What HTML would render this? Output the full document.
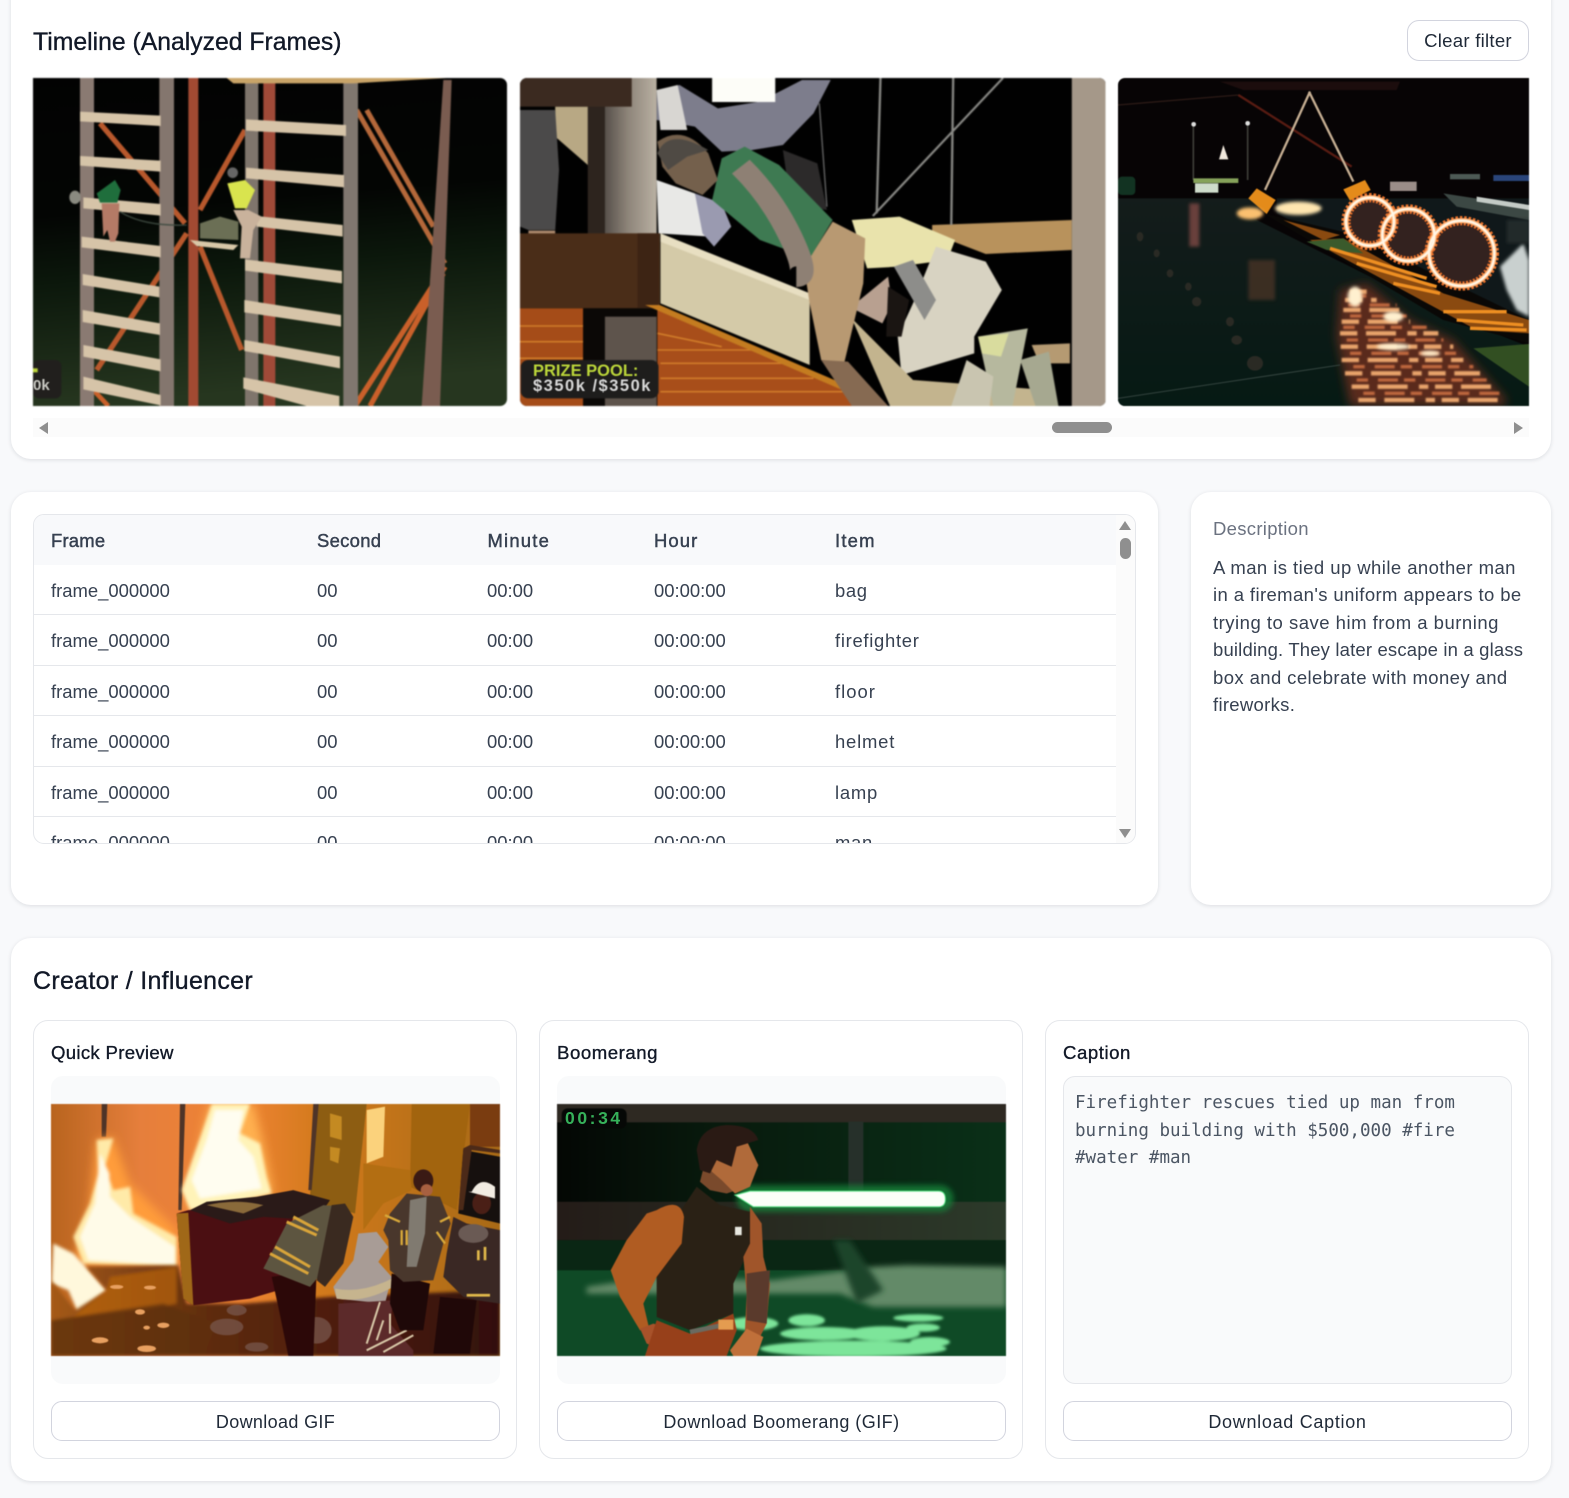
<!DOCTYPE html>
<html lang="en"><head><meta charset="utf-8"><title>Timeline</title>
<style>
html,body{margin:0;padding:0;background:#f8f9fb;}
body{position:relative;width:1569px;height:1498px;overflow:hidden;font-family:"Liberation Sans",sans-serif;color:#1f2937;}
.a{position:absolute;white-space:nowrap;}
.card{position:absolute;background:#fff;border-radius:20px;box-shadow:0 1px 4px rgba(17,24,39,.12);}
.sub{position:absolute;background:#fff;border:1px solid #e5e7eb;border-radius:15px;box-sizing:border-box;}
.btn{position:absolute;background:#fff;border:1px solid #d2d4de;border-radius:11px;box-sizing:border-box;text-align:center;font-size:18px;color:#1f2937;line-height:40px;}
.media{position:absolute;background:#f9fafb;border-radius:12px;}
svg.ph{position:absolute;display:block;}
.t{position:absolute;white-space:nowrap;font-size:18.45px;line-height:24px;color:#374151;}
.h{position:absolute;white-space:nowrap;font-size:18.45px;line-height:24px;color:#374151;-webkit-text-stroke:.45px #374151;}
.ln{position:absolute;left:34px;width:1082px;height:1px;background:#e5e7eb;}
.tr{position:absolute;width:0;height:0;}
.ds{display:block;}
h2,h3{margin:0;font-weight:400;}
</style></head><body>

<div class="card" style="left:11px;top:-20px;width:1540px;height:479px"></div>
<h2 class="a" style="left:33px;top:28px;font-size:24.75px;line-height:30px;color:#111827;-webkit-text-stroke:.35px #111827">Timeline (Analyzed Frames)</h2>
<div class="btn" style="left:1407px;top:20px;width:122px;height:41px;border-radius:12px;line-height:40px;font-size:18.6px;letter-spacing:.25px">Clear filter</div>

<!-- frame 1 -->
<svg class="ph" style="left:33px;top:78px;width:474px;height:328px;border-radius:0 7px 7px 0;filter:blur(.7px)" viewBox="99 234 1422 984" preserveAspectRatio="none">
<defs><linearGradient id="g1" x1="0" y1="0" x2=".12" y2="1"><stop offset="0" stop-color="#020202"/><stop offset=".42" stop-color="#030503"/><stop offset=".62" stop-color="#0b170b"/><stop offset="1" stop-color="#26361f"/></linearGradient></defs>
<rect x="99" y="234" width="1422" height="984" fill="url(#g1)"/>
<g stroke-linecap="butt" fill="none">
<path d="M300 370L555 670M560 700L290 1110M600 630L735 390M600 740L725 1050" stroke="#b8582c" stroke-width="16"/>
<path d="M1070 330L1335 790M1100 330L1300 680" stroke="#b5683a" stroke-width="15"/>
<path d="M1335 800L1065 1218M1330 820L1110 1218" stroke="#c9602a" stroke-width="16"/>
<path d="M280 1170L325 1218" stroke="#c9602a" stroke-width="14"/>
</g>
<rect x="565" y="234" width="30" height="984" fill="#a24a32"/>
<rect x="790" y="234" width="36" height="984" fill="#a04a38"/>
<path d="M1330 240H1355L1320 1218H1265Z" fill="#7a5c50"/>
<rect x="240" y="234" width="42" height="984" fill="#8a7a72"/>
<rect x="478" y="234" width="44" height="984" fill="#84766e"/>
<rect x="735" y="234" width="40" height="984" fill="#7f756c"/>
<rect x="1030" y="234" width="44" height="984" fill="#80776f"/>
<path d="M680 234H1340L1060 250H700Z" fill="#c9a468"/>
<g fill="#d6c4a8">
<path d="M240 335L482 347V378L240 364Z"/><path d="M240 468L482 482V515L240 497Z"/>
<path d="M250 592L482 612V647L250 625Z"/><path d="M245 710L482 738V772L245 742Z"/>
<path d="M248 822L478 860V892L248 855Z"/><path d="M248 930L480 970V1005L248 966Z"/>
<path d="M250 1035L482 1078V1114L250 1070Z"/><path d="M250 1130L482 1185V1216L250 1168Z"/>
<path d="M738 358L1038 375V408L738 392Z"/><path d="M738 503L1032 525V562L738 535Z"/>
<path d="M770 648L1028 675V710L770 680Z"/><path d="M735 778L1026 813V850L735 812Z"/>
<path d="M733 900L1023 945V980L733 937Z"/><path d="M733 1020L1020 1070V1105L733 1053Z"/>
<path d="M730 1132L1018 1188V1218H920L730 1166Z"/>
</g>
<ellipse cx="225" cy="592" rx="17" ry="20" fill="#8a8a80"/>
<path d="M290 580L345 540L362 570L352 608H300Z" fill="#1f6e3c"/>
<path d="M305 610H358L355 700L345 725H330L322 690L310 710Z" fill="#b47a66"/>
<path d="M360 635Q430 680 560 675" stroke="#3e4a40" stroke-width="4" fill="none"/>
<path d="M600 670L660 650L715 665L715 720L600 715Z" fill="#6b6f55"/>
<path d="M570 720L715 735L700 750L590 738Z" fill="#d8c8a8"/>
<circle cx="698" cy="518" r="16" fill="#666"/>
<path d="M682 550L735 540L765 570L740 625H705Z" fill="#d9e44e"/>
<path d="M700 630L745 630L785 650L760 690L750 775H720L725 680Z" fill="#c9b29c"/>
<rect x="99" y="1080" width="85" height="115" rx="18" fill="#211f1d"/>
<rect x="99" y="1105" width="14" height="12" fill="#bcd43a"/>
</svg>
<span class="a" style="left:33px;top:377px;font-size:15px;line-height:18px;font-weight:700;color:#c8c8c2;filter:blur(.4px)">0k</span>

<!-- frame 2 -->
<svg class="ph" style="left:520px;top:78px;width:585.5px;height:328px;border-radius:7px;filter:blur(.7px)" viewBox="13 24 1530 984" preserveAspectRatio="none">
<defs><linearGradient id="g2" x1="0" x2="1" y1="0" y2="0"><stop offset="0" stop-color="#57504a"/><stop offset=".45" stop-color="#8e857a"/><stop offset="1" stop-color="#b9b0a2"/></linearGradient></defs>
<rect x="13" y="24" width="1530" height="984" fill="#010101"/>
<path d="M105 110H195V290L105 200Z" fill="#b8a884"/>
<path d="M13 120H105L115 300L105 480H35L13 470Z" fill="#4b4a4a"/>
<path d="M35 482H105V510H35Z" fill="#b08c70"/>
<path d="M430 45L530 115L640 95L750 30H825L780 130L700 225L620 240L540 245L470 170L370 150V60Z" fill="#7d7d8c"/>
<path d="M370 60L425 45L450 180L380 180Z" fill="#d8d6d2"/>
<rect x="515" y="24" width="165" height="72" fill="#fdfdf8"/>
<path d="M370 330L470 370L510 500L375 490Z" fill="#e8e8e6"/>
<path d="M470 370L540 400L565 470L520 530L490 490Z" fill="#9a9ab0"/>
<path d="M700 240L790 280L815 420L720 400Z" fill="#2c2a2a"/>
<rect x="190" y="100" width="50" height="395" fill="#2d241e"/>
<rect x="235" y="24" width="135" height="470" fill="url(#g2)"/>
<rect x="13" y="24" width="292" height="86" fill="#3b2a20"/>
<path d="M1090 465L1455 450V540L1230 552L1090 490Z" fill="#b8925c"/>
<path d="M1350 825L1450 820V880H1370Z" fill="#b59a72"/>
<rect x="1455" y="24" width="88" height="984" fill="#a59889"/>
<path d="M955 24L945 430M1145 24L1140 465M1275 24L935 438" stroke="#8a8a86" stroke-width="6" fill="none"/>
<path d="M795 100L815 410" stroke="#777" stroke-width="3"/>
<rect x="13" y="490" width="365" height="225" fill="#4a2d18"/>
<rect x="320" y="490" width="55" height="225" fill="#3d2414"/>
<rect x="13" y="715" width="165" height="293" fill="#a54c18"/>
<path d="M13 768H178M13 815H178M13 865H178" stroke="#d8842c" stroke-width="4"/>
<rect x="178" y="715" width="200" height="293" fill="#0b0806"/>
<rect x="235" y="740" width="135" height="268" fill="#5e544c"/>
<path d="M372 712L870 950L880 1008H372Z" fill="#a84e1a"/>
<path d="M372 790L540 830M372 840H640M380 880H700M380 925H780M380 965H860" stroke="#d7842c" stroke-width="4" fill="none"/>
<path d="M340 705H378L865 945V965Z" fill="#c47c20"/>
<path d="M380 490L770 670V885L380 700Z" fill="#d4caa8"/>
<path d="M380 490L770 670V690L380 515Z" fill="#e8dfc2"/>
<path d="M880 450L1005 440L1150 510L1130 570L1000 590L920 595Z" fill="#e9e3ac"/>
<path d="M1100 530L1230 575L1272 660L1200 800L1200 850L1010 915L1000 800L1040 700Z" fill="#d8d3c2"/>
<path d="M890 700L975 620L985 700L960 760L890 720Z" fill="#b8a090"/>
<path d="M975 650L1030 690L1010 800L970 800Z" fill="#1a1512"/>
<path d="M990 590L1040 570L1100 690L1070 750Z" fill="#8d8d8a"/>
<path d="M880 745L1040 930L1390 960V1008H980Z" fill="#c3b48e"/>
<path d="M1210 800L1340 775L1300 1008H1250Z" fill="#b6b89e"/>
<path d="M1210 800L1290 790L1270 860L1220 850Z" fill="#d9dc9e"/>
<path d="M1320 870L1395 845L1420 1008H1360Z" fill="#a6a890"/>
<path d="M1180 870L1250 920L1240 1008H1140Z" fill="#c9c5b0"/>
<path d="M830 455L915 505L910 640L860 880L800 870L770 700L755 590Z" fill="#b89972"/>
<path d="M800 870L870 875L975 1008H880Z" fill="#866a52"/>
<path d="M540 265L600 230L690 285L830 450L770 565L640 510L515 390Z" fill="#3e7a52"/>
<path d="M590 290Q670 380 720 500T735 620" stroke="#8e8074" stroke-width="62" fill="none"/>
<path d="M372 215Q440 160 505 250L530 330L490 375L420 340L385 290Z" fill="#74604c"/>
<path d="M372 250Q400 170 505 240L450 260L400 300Z" fill="#4f4a44"/>
<rect x="15" y="870" width="360" height="115" rx="20" fill="#1e1d1c"/>
</svg>
<span class="a" style="left:533px;top:363px;font-size:16.5px;line-height:16px;font-weight:700;color:#bcd63a;filter:blur(.5px)">PRIZE POOL:</span>
<span class="a" style="left:533px;top:378px;font-size:16.5px;line-height:16px;font-weight:700;color:#d8d8d8;letter-spacing:1.5px;filter:blur(.5px)">$350k /$350k</span>

<!-- frame 3 -->
<svg class="ph" style="left:1118px;top:78px;width:411px;height:328px;border-radius:7px 0 0 7px;filter:blur(.6px)" viewBox="24 234 1233 984" preserveAspectRatio="none">
<defs>
<linearGradient id="g3" x1="0" y1="0" x2="0" y2="1"><stop offset="0" stop-color="#141c1b"/><stop offset="1" stop-color="#061a14"/></linearGradient>
<filter id="b3" x="-30%" y="-30%" width="160%" height="160%"><feGaussianBlur stdDeviation="5"/></filter>
<filter id="b4" x="-30%" y="-30%" width="160%" height="160%"><feGaussianBlur stdDeviation="14"/></filter>
<filter id="b5" x="-10%" y="-10%" width="120%" height="120%"><feGaussianBlur stdDeviation="2.5"/></filter>
</defs>
<rect x="24" y="234" width="1233" height="984" fill="#070405"/>
<path d="M330 245H870L860 270H400Z" fill="#1c0d0d"/>
<path d="M24 315L385 285" stroke="#2b1a16" stroke-width="4" fill="none"/>
<path d="M385 285L725 500" stroke="#571b12" stroke-width="7" fill="none"/>
<rect x="24" y="530" width="52" height="55" rx="12" fill="#123322"/>
<path d="M250 370V540M413 370V540" stroke="#3d3d38" stroke-width="5"/>
<circle cx="251" cy="373" r="7" fill="#ddd"/><circle cx="413" cy="370" r="7" fill="#ddd"/>
<path d="M340 435L355 478H327Z" fill="#f0e8dc"/>
<rect x="250" y="535" width="135" height="14" fill="#86a25a"/>
<rect x="255" y="550" width="70" height="28" fill="#cfdccb"/>
<rect x="840" y="545" width="80" height="28" fill="#9a8d88"/>
<rect x="1150" y="525" width="107" height="18" fill="#2a457a"/>
<rect x="1020" y="522" width="90" height="16" fill="#4d5a55"/>
<path d="M24 595H450L440 660L1000 940L1257 1040V1218H24Z" fill="url(#g3)"/>
<path d="M500 595L1257 595V1030L500 640Z" fill="#10181a"/>
<path d="M1000 580L1257 620V660L1040 620Z" fill="#3c4844"/>
<path d="M1100 590L1257 615V630L1100 605Z" fill="#c4cbc6"/>
<path d="M460 640L720 700L1257 960V1030L1000 960Z" fill="#0a0806"/>
<path d="M520 660L690 705L640 720ZM600 720L700 715L1000 880L1257 960V1000L1100 990Z" fill="#8a4a10"/>
<path d="M590 725L700 715L760 760L650 750Z" fill="#3a5a2c"/>
<path d="M660 745L950 835M740 790L980 860M850 850L990 880M1000 935L1190 935M1040 960L1240 975M1080 985L1250 990" stroke="#ee8f22" stroke-width="10" fill="none"/>
<path d="M1090 1045L1257 1032V1160Z" fill="#324f22"/>
<path d="M600 275L465 570M597 275L730 545" stroke="#c5ae92" stroke-width="7" fill="none"/>
<path d="M415 595L440 565L497 600L470 642Z" fill="#e48b1a"/>
<path d="M700 568L765 540L782 570L720 602Z" fill="#e48b1a"/>
<ellipse cx="420" cy="640" rx="40" ry="18" fill="#fbc070" filter="url(#b3)"/>
<ellipse cx="565" cy="625" rx="70" ry="20" fill="#ffe6b0" filter="url(#b3)"/>
<path d="M1170 800L1240 730L1257 780V950L1220 930L1190 870Z" fill="#c9d0cf" filter="url(#b3)"/>
<rect x="1190" y="660" width="67" height="70" fill="#242a2c" filter="url(#b3)"/>
<g fill="#33221f">
<circle cx="780" cy="665" r="72"/><circle cx="895" cy="705" r="78"/><circle cx="1055" cy="760" r="98"/></g>
<g fill="none">
<g stroke="#e8702a" stroke-width="28" stroke-dasharray="7 5"><circle cx="780" cy="665" r="72"/><circle cx="895" cy="705" r="78"/><circle cx="1055" cy="760" r="98"/></g>
<g stroke="#ffb478" stroke-width="15"><circle cx="780" cy="665" r="72"/><circle cx="895" cy="705" r="78"/><circle cx="1055" cy="760" r="98"/></g>
<g stroke="#fff6e6" stroke-width="7"><circle cx="780" cy="665" r="72"/><circle cx="895" cy="705" r="78"/><circle cx="1055" cy="760" r="98"/></g>
</g>
<rect x="238" y="610" width="30" height="130" fill="#7f4a44" filter="url(#b3)" opacity=".8"/>
<rect x="415" y="780" width="80" height="120" fill="#5a3a2c" filter="url(#b3)" opacity=".6"/>
<path d="M690 870L770 850L900 960L1030 1020L1190 1200L1180 1218H720L680 1010Z" fill="#5a2a1c" filter="url(#b4)"/>
<g filter="url(#b5)" fill="none">
<path d="M720 875H770M705 900H800M700 930H880M695 965H900M690 1000H985M692 1040H1030M695 1080H1060M705 1120H1110M725 1160H1150M745 1200H1190" stroke="#e9a46c" stroke-width="13" stroke-dasharray="52 26 90 34 28 20"/>
<path d="M735 888H780M715 915H860M720 948H890M700 982H950M710 1020H1000M720 1060H1040M730 1100H1090M740 1140H1130M760 1180H1170" stroke="#c0683e" stroke-width="10" stroke-dasharray="34 30 60 18"/>
</g>
<g fill="#fff0cf" filter="url(#b3)"><ellipse cx="735" cy="890" rx="22" ry="30"/><ellipse cx="850" cy="950" rx="30" ry="16"/><ellipse cx="850" cy="1040" rx="50" ry="10"/><ellipse cx="960" cy="1060" rx="30" ry="8"/></g>
<g fill="#2a2a24"><ellipse cx="90" cy="710" rx="10" ry="14"/><ellipse cx="140" cy="760" rx="9" ry="12"/><ellipse cx="180" cy="820" rx="10" ry="12"/><ellipse cx="235" cy="860" rx="10" ry="12"/><ellipse cx="260" cy="905" rx="14" ry="14"/><ellipse cx="360" cy="965" rx="12" ry="14"/><ellipse cx="380" cy="1020" rx="16" ry="14"/><ellipse cx="435" cy="1090" rx="24" ry="22"/></g>
<path d="M24 1195L690 1095" stroke="#33433e" stroke-width="3"/>
</svg>

<!-- horizontal scrollbar -->
<div class="a" style="left:33px;top:418px;width:1496px;height:19px;background:#fbfbfb"></div>
<div class="tr" style="left:39px;top:422px;border-top:6.3px solid transparent;border-bottom:6.3px solid transparent;border-right:9.5px solid #8f8f8f"></div>
<div class="tr" style="left:1514px;top:422px;border-top:6.3px solid transparent;border-bottom:6.3px solid transparent;border-left:9.5px solid #8f8f8f"></div>
<div class="a" style="left:1052px;top:422px;width:60px;height:11px;border-radius:6px;background:#8f8f8f"></div>

<!-- table card -->
<div class="card" style="left:11px;top:492px;width:1147px;height:413px"></div>
<div class="a" style="left:33px;top:514px;width:1103px;height:330px;border:1px solid #e5e7eb;border-radius:11px;box-sizing:border-box;overflow:hidden;background:#fff">
  <div style="position:absolute;left:0;top:0;width:1083px;height:50px;background:#f8f9fb"></div>
  <div style="position:absolute;right:0;top:0;width:19px;height:330px;background:#fbfbfb"></div>
  <span class="t" style="left:17px;top:316px">frame_000000</span><span class="t" style="left:283px;top:316px">00</span><span class="t" style="left:453px;top:316px">00:00</span><span class="t" style="left:620px;top:316px">00:00:00</span><span class="t" style="left:801px;top:316px;letter-spacing:.7px">man</span>
</div>
<div class="ln" style="top:614px"></div><div class="ln" style="top:665px"></div><div class="ln" style="top:715px"></div><div class="ln" style="top:766px"></div><div class="ln" style="top:816px"></div>
<div class="tr" style="left:1119px;top:521px;border-left:6.3px solid transparent;border-right:6.3px solid transparent;border-bottom:9.5px solid #8f8f8f"></div>
<div class="a" style="left:1120px;top:538px;width:11px;height:21px;border-radius:6px;background:#8f8f8f"></div>
<div class="tr" style="left:1119px;top:828.5px;border-left:6.3px solid transparent;border-right:6.3px solid transparent;border-top:9.5px solid #8f8f8f"></div>

<span class="h" style="left:51px;top:529px;letter-spacing:.2px">Frame</span><span class="h" style="left:317px;top:529px;letter-spacing:.3px">Second</span><span class="h" style="left:487.5px;top:529px;letter-spacing:1.2px">Minute</span><span class="h" style="left:654px;top:529px;letter-spacing:1.1px">Hour</span><span class="h" style="left:835px;top:529px;letter-spacing:1.2px">Item</span>

<span class="t" style="left:51px;top:579px">frame_000000</span><span class="t" style="left:317px;top:579px">00</span><span class="t" style="left:487px;top:579px">00:00</span><span class="t" style="left:654px;top:579px">00:00:00</span><span class="t" style="left:835px;top:579px;letter-spacing:.6px">bag</span>
<span class="t" style="left:51px;top:629px">frame_000000</span><span class="t" style="left:317px;top:629px">00</span><span class="t" style="left:487px;top:629px">00:00</span><span class="t" style="left:654px;top:629px">00:00:00</span><span class="t" style="left:835px;top:629px;letter-spacing:.7px">firefighter</span>
<span class="t" style="left:51px;top:680px">frame_000000</span><span class="t" style="left:317px;top:680px">00</span><span class="t" style="left:487px;top:680px">00:00</span><span class="t" style="left:654px;top:680px">00:00:00</span><span class="t" style="left:835px;top:680px;letter-spacing:1px">floor</span>
<span class="t" style="left:51px;top:730px">frame_000000</span><span class="t" style="left:317px;top:730px">00</span><span class="t" style="left:487px;top:730px">00:00</span><span class="t" style="left:654px;top:730px">00:00:00</span><span class="t" style="left:835px;top:730px;letter-spacing:.8px">helmet</span>
<span class="t" style="left:51px;top:781px">frame_000000</span><span class="t" style="left:317px;top:781px">00</span><span class="t" style="left:487px;top:781px">00:00</span><span class="t" style="left:654px;top:781px">00:00:00</span><span class="t" style="left:835px;top:781px;letter-spacing:.75px">lamp</span>

<!-- description -->
<div class="card" style="left:1191px;top:492px;width:360px;height:413px"></div>
<span class="a" style="left:1213px;top:517px;font-size:18.5px;line-height:24px;color:#6b7280;letter-spacing:.3px">Description</span>
<div class="a" style="left:1213px;top:554px;font-size:18.5px;line-height:27.4px;color:#374151"><span class="ds" style="letter-spacing:.44px">A man is tied up while another man</span><span class="ds" style="letter-spacing:.39px">in a fireman's uniform appears to be</span><span class="ds" style="letter-spacing:.5px">trying to save him from a burning</span><span class="ds" style="letter-spacing:.16px">building. They later escape in a glass</span><span class="ds" style="letter-spacing:.4px">box and celebrate with money and</span><span class="ds" style="letter-spacing:.3px">fireworks.</span></div>

<!-- creator -->
<div class="card" style="left:11px;top:938px;width:1540px;height:543px"></div>
<h2 class="a" style="left:33px;top:966px;font-size:25px;line-height:30px;color:#111827;letter-spacing:.3px;-webkit-text-stroke:.35px #111827">Creator / Influencer</h2>

<div class="sub" style="left:33px;top:1020px;width:484px;height:439px"></div>
<div class="sub" style="left:539px;top:1020px;width:484px;height:439px"></div>
<div class="sub" style="left:1045px;top:1020px;width:484px;height:439px"></div>
<h3 class="a" style="left:51px;top:1041px;font-size:18.6px;line-height:24px;color:#111827;letter-spacing:.3px;-webkit-text-stroke:.35px #111827">Quick Preview</h3>
<h3 class="a" style="left:557px;top:1041px;font-size:18.6px;line-height:24px;color:#111827;letter-spacing:.55px;-webkit-text-stroke:.35px #111827">Boomerang</h3>
<h3 class="a" style="left:1063px;top:1041px;font-size:18.6px;line-height:24px;color:#111827;letter-spacing:.55px;-webkit-text-stroke:.35px #111827">Caption</h3>

<div class="media" style="left:51px;top:1076px;width:449px;height:308px"></div>
<div class="media" style="left:557px;top:1076px;width:449px;height:308px"></div>
<div class="media" style="left:1063px;top:1076px;width:449px;height:308px;border:1px solid #e5e7eb;box-sizing:border-box"></div>

<!-- quick preview -->
<svg class="ph" style="left:51px;top:1104px;width:449px;height:252px;filter:blur(.6px)" viewBox="63 42 1347 755" preserveAspectRatio="none">
<defs>
<linearGradient id="f1" x1="0" x2="1" y1="0" y2="0"><stop offset="0" stop-color="#b8641e"/><stop offset=".2" stop-color="#e67f3c"/><stop offset=".42" stop-color="#f08434"/><stop offset=".6" stop-color="#d27a1c"/><stop offset="1" stop-color="#a86a16"/></linearGradient>
<linearGradient id="f2" x1="0" x2="1" y1="0" y2="0"><stop offset="0" stop-color="#a55a16"/><stop offset=".35" stop-color="#5e2c10"/><stop offset=".7" stop-color="#4a1a12"/><stop offset="1" stop-color="#32100e"/></linearGradient>
<filter id="fb" x="-20%" y="-20%" width="140%" height="140%"><feGaussianBlur stdDeviation="5"/></filter>
<filter id="fc" x="-20%" y="-20%" width="140%" height="140%"><feGaussianBlur stdDeviation="14"/></filter>
</defs>
<rect x="63" y="42" width="1347" height="755" fill="url(#f1)"/>
<path d="M850 42H1010L975 370L840 330Z" fill="#8d5d12"/>
<path d="M1145 42H1320L1280 360L1200 320L1140 290Z" fill="#a2640e"/>
<path d="M1320 42H1410V170L1320 170Z" fill="#7a3c10"/>
<path d="M1010 60L1065 50L1060 200L1010 220Z" fill="#fbd27c"/>
<path d="M1000 220L1140 240L1145 300L1060 340L1000 420Z" fill="#b36e12"/>
<path d="M900 70L935 80L935 150L900 140ZM900 170L930 175L925 220L900 210Z" fill="#c48a22"/>
<path d="M215 42H232L228 140H215ZM450 42H466L455 360H445ZM850 42H866L845 300H835Z" fill="#4e3428"/>
<path d="M1300 180L1410 200V400L1285 370Z" fill="#16100e"/>
<path d="M1300 175L1320 165L1410 180V190L1325 180L1300 360H1285Z" fill="#4c2a18"/>
<path d="M130 520L180 350L200 150L250 140L300 280L440 420V530Z" fill="#ff9c3a" filter="url(#fc)"/>
<path d="M470 360L520 120L540 42H670L700 160L730 310Z" fill="#ffb050" filter="url(#fc)"/>
<g filter="url(#fb)">
<path d="M545 42H660L630 130L690 160L710 260L725 310L620 335L480 360L455 300L490 200L515 130Z" fill="#fff3b8"/>
<path d="M555 60H640L625 150L670 200L695 295L510 325L485 270L530 150Z" fill="#fffdf0"/>
<path d="M200 150L250 145L225 230L250 300L300 290L310 370L440 440V530L160 520L130 440L180 340L205 250Z" fill="#ffeaa8"/>
<path d="M210 190L238 250L240 320L300 380L435 470V525L175 510L150 440L195 340Z" fill="#fffbe8"/>
<path d="M70 460L130 490L230 600L145 670L115 600L65 580Z" fill="#fff8dc"/>
</g>
<g filter="url(#fb)">
<path d="M63 570L135 660L230 600L170 530L445 525L470 640L640 640L900 620L1410 600V797H63Z" fill="url(#f2)"/>
<path d="M240 560L440 530V640L340 660L130 680L230 600Z" fill="#b8640f" opacity=".7"/>
<path d="M63 690L400 640L560 700L520 797H63Z" fill="#5e300e" opacity=".8"/>
</g>
<g fill="#e8a060"><ellipse cx="210" cy="750" rx="25" ry="9"/><ellipse cx="350" cy="775" rx="28" ry="10"/><ellipse cx="400" cy="705" rx="18" ry="8"/><ellipse cx="260" cy="590" rx="20" ry="6"/><ellipse cx="360" cy="592" rx="18" ry="6"/><ellipse cx="330" cy="665" rx="15" ry="8"/><ellipse cx="350" cy="712" rx="10" ry="6"/></g>
<g fill="#7a5a50" opacity=".7"><ellipse cx="590" cy="710" rx="50" ry="25"/><ellipse cx="620" cy="660" rx="30" ry="16"/><ellipse cx="680" cy="770" rx="35" ry="14"/><ellipse cx="860" cy="720" rx="45" ry="40"/></g>
<path d="M440 370L475 360L790 340L780 590L660 625L490 645L460 625Z" fill="#4b0f12"/>
<path d="M440 370L475 368L490 645L460 625Z" fill="#a06818"/>
<path d="M480 360L530 335L680 320L790 300L900 330L860 390L700 380L600 400Z" fill="#2a1a18"/>
<path d="M530 345Q620 325 700 345L640 370Z" fill="#8a6a3a"/>
<path d="M725 560L860 540L850 797H775L745 650Z" fill="#2c0808"/>
<path d="M700 535L770 400L880 345L945 350L945 450L890 530L840 590Z" fill="#5d5540"/>
<path d="M770 395L860 435M790 380L865 420M720 490L835 550M735 470L840 530" stroke="#d8a43a" stroke-width="9" fill="none"/>
<path d="M905 345L945 340L970 380L940 520L885 590L860 570Z" fill="#3a2a20"/>
<path d="M985 430L1040 425L1075 470L1045 515L1085 560L1065 640L920 625L910 590L970 510Z" fill="#a89c96"/>
<path d="M915 595Q1000 610 1085 565L1090 590Q1000 640 920 625Z" fill="#c6b48e"/>
<path d="M925 640L1090 630L1080 700L1150 780V797H925Z" fill="#5c2a2a"/>
<path d="M1010 760L1050 635M1060 690L1040 750M1080 670V730M1010 780L1130 720M1060 785L1150 735" stroke="#d8c8a8" stroke-width="6" fill="none"/>
<path d="M1085 550L1200 580L1180 720H1110L1080 640Z" fill="#1e0808"/>
<path d="M1080 370L1130 310L1230 320L1262 400L1240 460L1210 570L1120 575L1080 540L1075 450L1060 420Z" fill="#49372c"/>
<path d="M1140 330L1190 320L1185 430L1160 530H1130Z" fill="#807a70"/>
<path d="M1065 375L1110 395M1115 420V465M1130 420V465M1230 395L1260 380M1220 425L1245 460" stroke="#d8a83a" stroke-width="7" fill="none"/>
<ellipse cx="1180" cy="272" rx="30" ry="34" fill="#3a1a14"/>
<ellipse cx="1190" cy="300" rx="18" ry="18" fill="#a86040"/>
<path d="M1270 380L1310 400L1410 420V640L1340 630L1300 620L1240 560L1250 490Z" fill="#3a2824"/>
<path d="M1230 620L1340 630L1320 790H1210Z" fill="#200808"/>
<path d="M1345 480V510M1365 470V510M1310 615H1380" stroke="#e0b84a" stroke-width="8" fill="none"/>
<ellipse cx="1330" cy="430" rx="45" ry="28" fill="#6a5a54"/>
<ellipse cx="1355" cy="340" rx="28" ry="32" fill="#4a1f16"/>
<path d="M1325 305Q1350 255 1395 290V325L1315 305Z" fill="#f2ece2"/>
</svg>

<!-- boomerang -->
<svg class="ph" style="left:557px;top:1104px;width:449px;height:252px;filter:blur(.6px)" viewBox="51 42 1347 755" preserveAspectRatio="none">
<defs>
<linearGradient id="b1" x1="0" x2="1" y1="0" y2="0"><stop offset="0" stop-color="#040704"/><stop offset=".35" stop-color="#081a0d"/><stop offset="1" stop-color="#0a3018"/></linearGradient>
<linearGradient id="b2" x1="0" x2="1" y1="0" y2="0"><stop offset="0" stop-color="#241c18"/><stop offset="1" stop-color="#2c3a2a"/></linearGradient>
<filter id="bb" x="-20%" y="-60%" width="140%" height="220%"><feGaussianBlur stdDeviation="9"/></filter>
<filter id="bc" x="-20%" y="-20%" width="140%" height="140%"><feGaussianBlur stdDeviation="4"/></filter>
</defs>
<rect x="51" y="42" width="1347" height="755" fill="url(#b1)"/>
<rect x="51" y="42" width="1347" height="55" fill="#2e2922"/>
<rect x="925" y="95" width="45" height="210" fill="#26302a"/>
<rect x="51" y="335" width="1347" height="115" fill="url(#b2)"/>
<rect x="51" y="450" width="1347" height="90" fill="#0a2614"/>
<rect x="51" y="540" width="1347" height="257" fill="#0f4a26"/>
<path d="M140 590L340 560L700 570L1000 530L1100 525L1398 530V650L1000 650L900 610L700 610H340L140 610Z" fill="#648a68" filter="url(#bb)"/>
<path d="M880 450L930 450L1030 600L950 640Z" fill="#1c4429" filter="url(#bb)"/>
<rect x="590" y="285" width="650" height="80" rx="40" fill="#16843a" filter="url(#bb)" opacity=".8"/>
<path d="M585 315L630 303H1195Q1216 303 1216 327Q1216 350 1195 350H640Z" fill="#fbfff8" stroke="#5de487" stroke-width="3"/>
<g fill="#7de59a" filter="url(#bc)"><ellipse cx="640" cy="700" rx="75" ry="20"/><ellipse cx="800" cy="690" rx="55" ry="18"/><ellipse cx="1135" cy="683" rx="75" ry="11"/><ellipse cx="1150" cy="712" rx="50" ry="12"/><ellipse cx="850" cy="730" rx="130" ry="20"/><ellipse cx="1030" cy="730" rx="110" ry="22"/><ellipse cx="940" cy="775" rx="280" ry="24"/><ellipse cx="1170" cy="755" rx="60" ry="15"/></g>
<path d="M350 680L350 480L430 350L470 290L540 345L630 365L630 470L580 580L580 670L450 720Z" fill="#2a2115"/>
<path d="M350 360Q420 320 432 380L425 460L350 560L310 640L330 725L300 720L240 620L212 540L260 450L320 370Z" fill="#b05c22"/>
<path d="M300 715L340 700L430 725L450 770L420 790L350 770L320 760Z" fill="#a8522a"/>
<path d="M630 350L665 400L670 500L690 580L680 700L650 760L615 720L620 610L610 500L630 460Z" fill="#a0552a"/>
<path d="M620 550L690 540L680 700L620 690Z" fill="#5a3a2c"/>
<path d="M315 797L350 690L450 730L580 670L590 720L560 797Z" fill="#97401a"/>
<path d="M450 725L570 700" stroke="#6a6a60" stroke-width="14"/>
<rect x="535" y="688" width="45" height="30" fill="#e49c50"/>
<path d="M570 780L620 715L670 740L650 797H580Z" fill="#c0703a"/>
<path d="M480 275L490 235L530 250L600 240L620 290L560 310L510 300Z" fill="#7a4a2c"/>
<path d="M520 120L600 110L655 225L630 290L585 310L545 270L510 240Z" fill="#b06a3a"/>
<path d="M470 180Q480 110 560 105Q640 105 655 150L590 170L575 230L530 210L510 250L480 240Z" fill="#2a1a14"/>
<path d="M585 410H605V435H585Z" fill="#e8e8e0"/>
<rect x="65" y="55" width="195" height="60" rx="18" fill="#060806"/>
</svg>
<span class="a" style="left:565px;top:1108px;font-size:17.5px;line-height:20px;font-weight:700;color:#36b15a;letter-spacing:2.6px;filter:blur(.3px)">00:34</span>

<div class="a" style="left:1075px;top:1090px;font-family:'DejaVu Sans Mono','Liberation Mono',monospace;font-size:17.55px;line-height:27.5px;color:#4b5563">Firefighter rescues tied up man from<br>burning building with $500,000 #fire<br>#water #man</div>

<div class="btn" style="left:51px;top:1401px;width:449px;height:40px;letter-spacing:.35px">Download GIF</div>
<div class="btn" style="left:557px;top:1401px;width:449px;height:40px;letter-spacing:.46px">Download Boomerang (GIF)</div>
<div class="btn" style="left:1063px;top:1401px;width:449px;height:40px;letter-spacing:.7px">Download Caption</div>

</body></html>
